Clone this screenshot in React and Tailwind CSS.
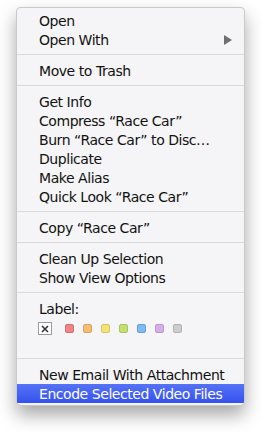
import React from 'react'

const SWATCHES = [
  { bg: 'bg-[#ee8585]', border: 'border-[#d46f6f]' },
  { bg: 'bg-[#f6bd72]', border: 'border-[#dea25a]' },
  { bg: 'bg-[#f3e27a]', border: 'border-[#d9c75e]' },
  { bg: 'bg-[#c6df74]', border: 'border-[#abc45c]' },
  { bg: 'bg-[#7fbaf4]', border: 'border-[#62a0dc]' },
  { bg: 'bg-[#d6aee8]', border: 'border-[#bc94cf]' },
  { bg: 'bg-[#cdcdcd]', border: 'border-[#b2b2b2]' },
]

function Item({ children, arrow, active }) {
  return (
    <div
      className={`h-[19px] flex items-center justify-between pl-[22px] pr-[12px] leading-none whitespace-nowrap ${
        active ? 'bg-gradient-to-b from-[#5672f6] to-[#3451ee] text-white' : 'text-[#111]'
      }`}
    >
      <span>{children}</span>
      {arrow && (
        <svg width="8" height="10" viewBox="0 0 8 10">
          <path d="M0 0 L8 5 L0 10 Z" fill="#6e6e6e" />
        </svg>
      )}
    </div>
  )
}

function Sep() {
  return (
    <div className="h-[12px] pt-[5px]">
      <div className="h-px bg-[#dadada]" />
    </div>
  )
}

export default function App() {
  return (
    <div className="w-[262px] h-[433px] bg-white pt-[7px] pl-[16px]">
      <div
        className="w-[229px] bg-[#f5f5f7] border border-[#c9c9cc] rounded-b-[5px] rounded-t-[4px] pt-[3px] pb-[2px] shadow-[0_9px_18px_rgba(0,0,0,0.35)] text-[14px] tracking-[-0.45px] overflow-hidden"
        style={{ fontFamily: '"DejaVu Sans", "Liberation Sans", sans-serif' }}
      >
        <Item>Open</Item>
        <Item arrow>Open With</Item>
        <Sep />
        <Item>Move to Trash</Item>
        <Sep />
        <Item>Get Info</Item>
        <Item>Compress “Race Car”</Item>
        <Item>Burn “Race Car” to Disc…</Item>
        <Item>Duplicate</Item>
        <Item>Make Alias</Item>
        <Item>Quick Look “Race Car”</Item>
        <Sep />
        <Item>Copy “Race Car”</Item>
        <Sep />
        <Item>Clean Up Selection</Item>
        <Item>Show View Options</Item>
        <Sep />
        <Item>Label:</Item>
        <div className="flex items-center pl-[21px] mt-[4px] h-[13px]">
          <div className="w-[14px] h-[13px] bg-white border border-[#9a9a9a] flex items-center justify-center mr-[13px]">
            <svg width="8" height="8" viewBox="0 0 8 8">
              <path d="M1 1 L7 7 M7 1 L1 7" stroke="#333" strokeWidth="1.6" />
            </svg>
          </div>
          <div className="flex gap-[9px]">
            {SWATCHES.map((s, i) => (
              <div key={i} className={`w-[9px] h-[9px] rounded-[2px] border ${s.bg} ${s.border}`} />
            ))}
          </div>
        </div>
        <div className="h-[18px]" />
        <Sep />
        <Item>New Email With Attachment</Item>
        <Item active>Encode Selected Video Files</Item>
      </div>
    </div>
  )
}
